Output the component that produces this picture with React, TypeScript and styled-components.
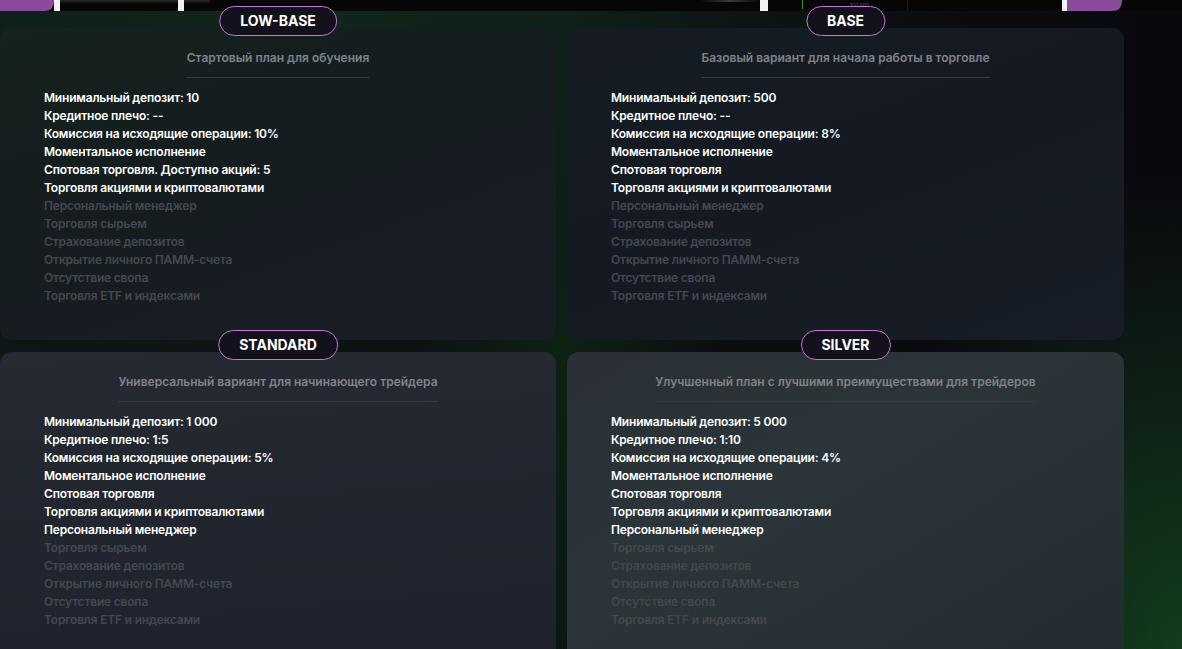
import React from "react";
import styled, { createGlobalStyle } from "styled-components";

const GlobalStyle = createGlobalStyle`
  html, body {
    margin: 0;
    padding: 0;
    background: #0a0a0f;
    overflow: hidden;
  }
  * { box-sizing: border-box; }
`;

const Page = styled.div`
  width: 1182px;
  height: 649px;
  overflow: hidden;
  display: flex;
  flex-direction: column;
  font-family: Inter, "Noto Sans", sans-serif;
  background:
    radial-gradient(ellipse 320px 480px at 100% 100%, rgba(20, 66, 30, 0.9), rgba(20, 66, 30, 0) 100%),
    radial-gradient(ellipse 700px 380px at 25% 0%, rgba(16, 40, 28, 0.95), rgba(16, 40, 28, 0) 100%),
    radial-gradient(ellipse 160px 520px at 48% 55%, rgba(14, 36, 20, 0.9), rgba(14, 36, 20, 0) 100%),
    linear-gradient(90deg, #0d1714 0%, #0b0d10 60%, #09080e 100%);
`;

const Strip = styled.div`
  height: 11px;
  flex: none;
  background: #060606;
  line-height: 0;
`;

const Grid = styled.div`
  display: grid;
  grid-template-columns: 556px 557px;
  column-gap: 11px;
  row-gap: 12px;
  padding-top: 17px;
`;

type Tone = "a" | "b" | "c" | "d";

const toneBg: Record<Tone, string> = {
  a: "linear-gradient(160deg, #16221e 0%, #151c20 45%, #191e26 100%)",
  b: "linear-gradient(160deg, #161c23 0%, #151a22 50%, #171d26 100%)",
  c: "linear-gradient(175deg, #262b33 0%, #22262f 40%, #1f222c 100%)",
  d: "linear-gradient(150deg, #2a3036 0%, #2b3539 45%, #232b31 100%)",
};

const Card = styled.section<{ $tone: Tone }>`
  position: relative;
  height: 312px;
  border-radius: 12px;
  background: ${(p) => toneBg[p.$tone]};
  padding: 21px 24px 36px 44px;
  display: flex;
  flex-direction: column;
`;

const Badge = styled.div`
  position: absolute;
  top: -22px;
  left: 50%;
  transform: translateX(-50%);
  height: 30px;
  padding: 0 20px;
  border-radius: 15px;
  border: 1.5px solid #c274da;
  background: #13111b;
  color: #ffffff;
  font-weight: 700;
  font-size: 14px;
  line-height: 27px;
  white-space: nowrap;
`;

const Subtitle = styled.div`
  align-self: center;
  margin-left: -20px;
  color: #80838a;
  font-size: 12px;
  font-weight: 600;
  line-height: 18px;
  padding-bottom: 10px;
  border-bottom: 1px solid #343a42;
  white-space: nowrap;
`;

const List = styled.ul`
  list-style: none;
  margin: 11px 0 0;
  padding: 0;
`;

const Item = styled.li<{ $off?: boolean }>`
  color: ${(p) => (p.$off ? "#434850" : "#ffffff")};
  font-size: 12px;
  font-weight: 600;
  line-height: 18px;
  white-space: nowrap;
  letter-spacing: -0.2px;
`;

type Plan = {
  name: string;
  tone: Tone;
  subtitle: string;
  on: string[];
  off: string[];
};

const plans: Plan[] = [
  {
    name: "LOW-BASE",
    tone: "a",
    subtitle: "Стартовый план для обучения",
    on: [
      "Минимальный депозит: 10",
      "Кредитное плечо: --",
      "Комиссия на исходящие операции: 10%",
      "Моментальное исполнение",
      "Спотовая торговля. Доступно акций: 5",
      "Торговля акциями и криптовалютами",
    ],
    off: [
      "Персональный менеджер",
      "Торговля сырьем",
      "Страхование депозитов",
      "Открытие личного ПАММ-счета",
      "Отсутствие свопа",
      "Торговля ETF и индексами",
    ],
  },
  {
    name: "BASE",
    tone: "b",
    subtitle: "Базовый вариант для начала работы в торговле",
    on: [
      "Минимальный депозит: 500",
      "Кредитное плечо: --",
      "Комиссия на исходящие операции: 8%",
      "Моментальное исполнение",
      "Спотовая торговля",
      "Торговля акциями и криптовалютами",
    ],
    off: [
      "Персональный менеджер",
      "Торговля сырьем",
      "Страхование депозитов",
      "Открытие личного ПАММ-счета",
      "Отсутствие свопа",
      "Торговля ETF и индексами",
    ],
  },
  {
    name: "STANDARD",
    tone: "c",
    subtitle: "Универсальный вариант для начинающего трейдера",
    on: [
      "Минимальный депозит: 1 000",
      "Кредитное плечо: 1:5",
      "Комиссия на исходящие операции: 5%",
      "Моментальное исполнение",
      "Спотовая торговля",
      "Торговля акциями и криптовалютами",
      "Персональный менеджер",
    ],
    off: [
      "Торговля сырьем",
      "Страхование депозитов",
      "Открытие личного ПАММ-счета",
      "Отсутствие свопа",
      "Торговля ETF и индексами",
    ],
  },
  {
    name: "SILVER",
    tone: "d",
    subtitle: "Улучшенный план с лучшими преимуществами для трейдеров",
    on: [
      "Минимальный депозит: 5 000",
      "Кредитное плечо: 1:10",
      "Комиссия на исходящие операции: 4%",
      "Моментальное исполнение",
      "Спотовая торговля",
      "Торговля акциями и криптовалютами",
      "Персональный менеджер",
    ],
    off: [
      "Торговля сырьем",
      "Страхование депозитов",
      "Открытие личного ПАММ-счета",
      "Отсутствие свопа",
      "Торговля ETF и индексами",
    ],
  },
];

const StripArt = () => (
  <svg width="1182" height="11" viewBox="0 0 1182 11">
    <defs>
      <linearGradient id="olive" x1="0" y1="0" x2="0" y2="1">
        <stop offset="0" stopColor="#2c2818" />
        <stop offset="1" stopColor="#060606" />
      </linearGradient>
      <linearGradient id="fadeR" x1="0" y1="0" x2="1" y2="0">
        <stop offset="0" stopColor="#060606" />
        <stop offset="0.5" stopColor="#3a3a3a" />
        <stop offset="1" stopColor="#060606" />
      </linearGradient>
    </defs>
    <path d="M0 0 H54 V1 Q54 11 44 11 H0 Z" fill="#8b4b9d" />
    <rect x="54" y="0" width="6" height="11" fill="#f2f2f2" />
    <rect x="60" y="0" width="150" height="4" fill="url(#olive)" />
    <rect x="178" y="0" width="6" height="11" fill="#f2f2f2" />
    <rect x="700" y="0" width="60" height="2" fill="url(#fadeR)" />
    <rect x="760" y="0" width="8" height="11" fill="#f2f2f2" />
    <rect x="802" y="0" width="1" height="9" fill="#2f8c3c" />
    <text x="850" y="7" fontSize="5" fill="#5a5a5a" fontFamily="Inter, sans-serif">100.000</text>
    <rect x="907" y="0" width="1" height="11" fill="#1c1c1c" />
    <rect x="1062" y="0" width="5" height="11" fill="#f2f2f2" />
    <path d="M1067 0 H1122 V1 Q1122 11 1112 11 H1067 Z" fill="#8b4b9d" />
  </svg>
);

export default function App() {
  return (
    <>
      <GlobalStyle />
      <Page>
        <Strip>
          <StripArt />
        </Strip>
        <Grid>
          {plans.map((p) => (
            <Card key={p.name} $tone={p.tone}>
              <Badge>{p.name}</Badge>
              <Subtitle>{p.subtitle}</Subtitle>
              <List>
                {p.on.map((t) => (
                  <Item key={t}>{t}</Item>
                ))}
                {p.off.map((t) => (
                  <Item key={t} $off>
                    {t}
                  </Item>
                ))}
              </List>
            </Card>
          ))}
        </Grid>
      </Page>
    </>
  );
}
